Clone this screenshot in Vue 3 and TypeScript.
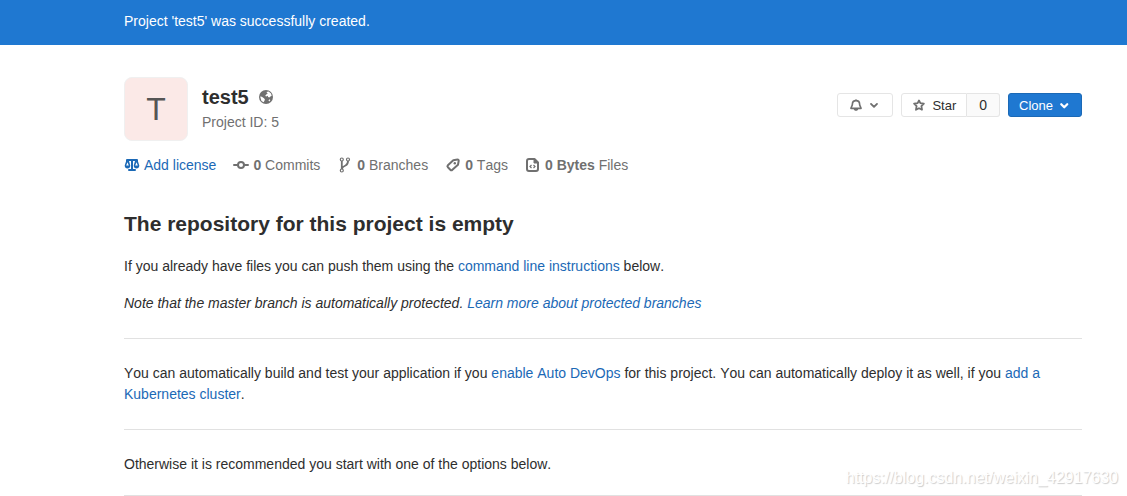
<script setup lang="ts">
interface Stat {
  icon: 'commit' | 'branch' | 'tag' | 'file'
  value: string
  label: string
}

const stats: Stat[] = [
  { icon: 'commit', value: '0', label: 'Commits' },
  { icon: 'branch', value: '0', label: 'Branches' },
  { icon: 'tag', value: '0', label: 'Tags' },
  { icon: 'file', value: '0 Bytes', label: 'Files' },
]
</script>

<template>
  <div class="page">
    <div class="flash" role="status">Project 'test5' was successfully created.</div>

    <main class="content">
      <header class="project">
        <div class="avatar">T</div>
        <div class="identity">
          <h1>
            test5
            <svg class="globe" viewBox="0 0 16 16" role="img" aria-label="Public">
              <circle cx="8" cy="8" r="8" fill="#707070" />
              <path fill="#fff" d="M8.500 2.200l2.500-.4 2.700 2.200.8 2.500-1.500.8-1.200 1.400-1.500-.8-.2-1.300-2 .8-1-.8 1.500-1.800 1.300-.5zM1.300 7.500l2 .3 2.700 2 .8 1.300-1.500 2.900-2.500-1.500zM10.800 11.600l1.500-1 .6 1.200-1.200 1.300z" />
            </svg>
          </h1>
          <p>Project ID: 5</p>
        </div>
        <div class="actions">
          <button class="btn notify" type="button" aria-label="Notification setting">
            <svg class="icon-small" viewBox="0 0 16 16" aria-hidden="true">
              <path fill="none" stroke="currentColor" stroke-width="2.200" stroke-linejoin="round" d="M8 2.200C5 2.200 3.200 4.200 3.200 7c0 2.500-1.900 3.500-1.900 5.500h13.400c0-2-1.900-3-1.900-5.500 0-2.800-1.800-4.800-4.800-4.800z" />
              <path fill="currentColor" d="M5 13h6c0 1.800-1.300 2.800-3 2.800S5 14.800 5 13zM7 .5h2v2H7z" />
            </svg>
            <svg class="icon-small" viewBox="0 0 16 16" aria-hidden="true">
              <path fill="none" stroke="currentColor" stroke-width="2.500" stroke-linecap="round" stroke-linejoin="round" d="M4 6.500l4 4 4-4" />
            </svg>
          </button>
          <div class="star-group">
            <button class="btn star" type="button">
              <svg class="icon-small" viewBox="0 0 16 16" aria-hidden="true">
                <path fill="none" stroke="#707070" stroke-width="2.400" stroke-linejoin="round" d="M8 2l1.800 3.600 4.700.7-3.300 3.200.8 4.800L8 12.300 4 14.300l.8-4.800-3.300-3.200 4.700-.7z" />
              </svg>
              Star
            </button>
            <a class="btn count" href="#starrers">0</a>
          </div>
          <button class="btn clone" type="button">
            Clone
            <svg class="icon-small" viewBox="0 0 16 16" aria-hidden="true">
              <path fill="none" stroke="currentColor" stroke-width="3" stroke-linecap="round" stroke-linejoin="round" d="M3 7l4 4 4-4" />
            </svg>
          </button>
        </div>
      </header>

      <nav class="stats" aria-label="Project statistics">
        <a class="stat license" href="#license">
          <svg class="icon" viewBox="0 0 16 16" aria-hidden="true">
            <path fill="currentColor" d="M3 2h10a1 1 0 0 1 1 1v1.500l1.300 4c0 2-1.200 3-2.800 3s-2.800-1-2.800-3L11 4H9v8h2a1 1 0 0 1 0 2H5a1 1 0 0 1 0-2h2V4H5l1.300 4.500c0 2-1.200 3-2.800 3s-2.800-1-2.800-3L2 4.500V3a1 1 0 0 1 1-1z" />
            <path fill="#fff" d="M3.500 5.300L2.200 8.500h2.600zM12.500 5.300l-1.300 3.200h2.600z" />
          </svg>
          Add license
        </a>
        <a v-for="stat in stats" :key="stat.label" class="stat" :href="'#' + stat.label.toLowerCase()">
          <svg class="icon" viewBox="0 0 16 16" aria-hidden="true">
            <g v-if="stat.icon === 'commit'" fill="none" stroke="currentColor" stroke-width="2" stroke-linecap="round">
              <circle cx="8" cy="8" r="3" />
              <path d="M1 8h4M11 8h4" />
            </g>
            <g v-else-if="stat.icon === 'branch'" fill="none" stroke="currentColor">
              <circle cx="4.800" cy="2.500" r="1.500" stroke-width="1.200" />
              <circle cx="11" cy="2.500" r="1.500" stroke-width="1.200" />
              <circle cx="4.800" cy="13.500" r="1.500" stroke-width="1.200" />
              <path stroke-width="1.800" d="M4.800 4v8M11 4c0 2.500-.5 3.500-2.500 4.500-2 .8-3.200 1.500-3.700 3.500" />
            </g>
            <g v-else-if="stat.icon === 'tag'">
              <path fill="none" stroke="currentColor" stroke-width="2" stroke-linejoin="round" d="M8.300 3.200L12.500 2.600a1 1 0 0 1 1.200 1.200L13 7.700 7.400 12.700a1.500 1.500 0 0 1-2.100 0L2.900 10.300a1.500 1.500 0 0 1 0-2.100z" />
              <circle cx="9.800" cy="6.200" r="1.200" fill="currentColor" />
            </g>
            <g v-else fill="none" stroke="currentColor">
              <path stroke-width="2" stroke-linejoin="round" d="M9.500 2H4a2 2 0 0 0-2 2v8a2 2 0 0 0 2 2h7a2 2 0 0 0 2-2V5.500z" />
              <path fill="currentColor" d="M9 2v4h4z" />
              <path stroke-width="1.200" d="M6.500 8L5 9.500 6.500 11M8.500 8l1.500 1.500L8.500 11" />
            </g>
          </svg>
          <span><strong>{{ stat.value }}</strong> {{ stat.label }}</span>
        </a>
      </nav>

      <section class="empty">
        <h2>The repository for this project is empty</h2>
        <p>If you already have files you can push them using the <a href="#instructions">command line instructions</a> below.</p>
        <p><em>Note that the master branch is automatically protected. <a href="#protected">Learn more about protected branches</a></em></p>
        <hr>
        <p>You can automatically build and test your application if you <a href="#devops">enable Auto DevOps</a> for this project. You can automatically deploy it as well, if you <a href="#cluster">add a Kubernetes cluster</a>.</p>
        <hr>
        <p>Otherwise it is recommended you start with one of the options below.</p>
        <hr class="last">
      </section>
    </main>

    <div class="watermark">https://blog.csdn.net/weixin_42917630</div>
  </div>
</template>

<style>
body {
  background: #fff;
}
</style>

<style scoped>
.page {
  position: relative;
  font: 14px/21px "Liberation Sans", Arial, sans-serif;
  font-kerning: none;
  color: #2e2e2e;
}

.flash {
  padding: 11px 45px 13px 124px;
  background: #1f78d1;
  color: #fff;
}

.content {
  padding: 0 45px 0 124px;
}

h1,
h2,
p {
  margin: 0;
}

a {
  color: #1b69b6;
  text-decoration: none;
}

.project {
  display: flex;
  align-items: flex-start;
  padding-top: 32px;
}

.avatar {
  box-sizing: border-box;
  flex: none;
  width: 64px;
  height: 64px;
  border: 1px solid #f0f0f0;
  border-radius: 8px;
  background: #fbe9e7;
  color: #555;
  font-size: 32px;
  line-height: 62px;
  text-align: center;
}

.identity {
  flex: 1;
  padding: 7px 0 0 14px;
}

.identity h1 {
  display: flex;
  align-items: center;
  gap: 10px;
  margin-bottom: 2px;
  font-size: 20px;
  line-height: 26px;
}

.identity p {
  color: #707070;
}

.globe {
  width: 14px;
  height: 14px;
}

.actions {
  display: flex;
  gap: 8px;
  padding-top: 16px;
}

.btn {
  box-sizing: border-box;
  display: flex;
  align-items: center;
  height: 24px;
  padding: 1px 10px 0;
  border: 1px solid #e5e5e5;
  border-radius: 3px;
  background: #fff;
  color: #2e2e2e;
  font: 13px/18px "Liberation Sans", Arial, sans-serif;
}

.notify {
  gap: 6px;
  padding: 1px 12px 0;
  color: #707070;
}

.star-group {
  display: flex;
}

.star {
  gap: 7px;
  padding-left: 11px;
  border-radius: 3px 0 0 3px;
}

.count {
  padding: 0 12px;
  border-left: 0;
  border-radius: 0 3px 3px 0;
  background: #fafafa;
  font-size: 14px;
}

.clone {
  gap: 6px;
  border-color: #1b69b6;
  background: #1f78d1;
  color: #fff;
}

.icon-small {
  flex: none;
  width: 12px;
  height: 12px;
  margin-bottom: 1px;
}

.stats {
  display: flex;
  flex-wrap: wrap;
  gap: 17px;
  padding-top: 14px;
}

.stat {
  display: flex;
  align-items: center;
  gap: 4px;
  color: #707070;
}

.license {
  color: #1b69b6;
}

.icon {
  flex: none;
  width: 16px;
  height: 16px;
  margin-bottom: 1px;
}

.empty {
  padding-top: 35px;
}

.empty h2 {
  margin-bottom: 19px;
  font-size: 21px;
  line-height: 26px;
}

.empty p + p {
  margin-top: 16px;
}

hr {
  height: 1px;
  margin: 24px 0;
  border: 0;
  background: #e1e1e1;
}

hr.last {
  margin: 20px 0 0;
}

.watermark {
  position: absolute;
  right: 9px;
  bottom: 8px;
  color: #fff;
  font-size: 16px;
  text-shadow: 1px 1px 1px #ccc;
}
</style>
